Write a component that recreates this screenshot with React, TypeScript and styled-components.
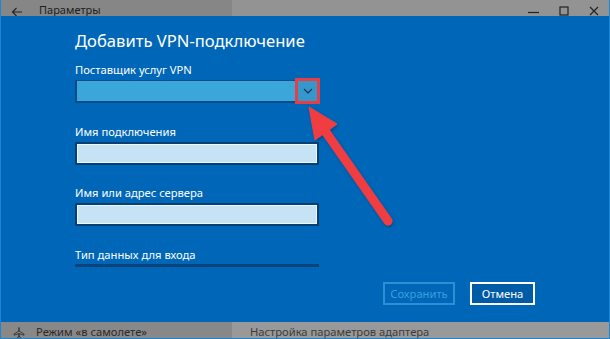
import styled, { createGlobalStyle } from "styled-components";

const GlobalStyle = createGlobalStyle`
  html, body {
    margin: 0;
    padding: 0;
    background: #0067b8;
  }
  * {
    box-sizing: border-box;
  }
`;

const FONT = `"Noto Sans", "Open Sans", sans-serif`;

// Окно
const Window = styled.div`
  position: relative;
  width: 610px;
  height: 339px;
  display: flex;
  flex-direction: column;
  overflow: hidden;
  border: 1px solid #1a86d6;
  border-top: none;
  font-family: ${FONT};
  background: #0067b8;
`;

const Bar = styled.div<{ $height: number }>`
  display: flex;
  height: ${({ $height }) => $height}px;
  flex-shrink: 0;
  overflow: hidden;
`;

const BarPart = styled.div<{ $bg: string; $width?: number }>`
  display: flex;
  align-items: flex-start;
  background: ${({ $bg }) => $bg};
  ${({ $width }) => ($width ? `width: ${$width}px;` : "flex: 1;")}
  overflow: hidden;
  white-space: nowrap;
`;

const BackIcon = styled.span`
  width: 14px;
  margin-left: 10px;
  margin-top: 7px;
  display: flex;
`;

const TitleText = styled.span`
  margin-left: 14px;
  margin-top: 3px;
  font-size: 11px;
  line-height: 14px;
  color: #1d1d1d;
`;

const WinControls = styled.div`
  margin-left: auto;
  display: flex;
  align-items: center;
  height: 16px;
  padding-top: 6px;
  padding-right: 10px;
  gap: 20px;
`;

const Dialog = styled.div`
  flex: 1;
  display: flex;
  flex-direction: column;
  padding-left: 74px;
  padding-right: 74px;
`;

const Heading = styled.h1`
  margin: 11px 0 0;
  font-weight: 400;
  font-size: 16.6px;
  line-height: 28px;
  color: #ffffff;
`;

const Label = styled.div<{ $top: number }>`
  margin-top: ${({ $top }) => $top}px;
  font-size: 11.2px;
  line-height: 16px;
  color: #ffffff;
`;

const Select = styled.div`
  margin-top: 2px;
  width: 244px;
  height: 23px;
  display: flex;
  background: #3aa6da;
  border: 2px solid #0b4c86;
  border-top-width: 1px;
  border-right: none;
`;

const ChevronBox = styled.div`
  margin-left: auto;
  position: relative;
  width: 22px;
  display: flex;
  align-items: center;
  justify-content: center;
  background: #3597cc;
`;

const Highlight = styled.div`
  position: absolute;
  left: -2px;
  top: -3px;
  right: -1px;
  bottom: -3px;
  border: 3px solid #ea3d43;
`;

const TextInput = styled.div`
  margin-top: 2px;
  width: 244px;
  height: 23px;
  background: #c6e2f5;
  border: 2px solid #0a3f72;
  box-shadow: inset 0 0 0 1px #eef7fd;
`;

const Underline = styled.div`
  margin-top: 1px;
  width: 244px;
  height: 3px;
  background: #0c4479;
`;

const Buttons = styled.div`
  margin-top: 15px;
  display: flex;
  justify-content: flex-end;
  gap: 15px;
`;

const Button = styled.button<{ $primary?: boolean }>`
  height: 23px;
  width: ${({ $primary }) => ($primary ? 65 : 72)}px;
  padding: 0;
  font-family: ${FONT};
  font-size: 11.2px;
  background: ${({ $primary }) => ($primary ? "#005ba6" : "transparent")};
  color: ${({ $primary }) => ($primary ? "#ffffff" : "#3a9ee0")};
  border: 2px solid ${({ $primary }) => ($primary ? "#ffffff" : "#2f8fd6")};
`;

const BottomText = styled.span<{ $indent: number; $color: string }>`
  margin-left: ${({ $indent }) => $indent}px;
  margin-top: 3px;
  font-size: 11.2px;
  line-height: 14px;
  color: ${({ $color }) => $color};
`;

const PlaneIcon = styled.span`
  margin-left: 12px;
  margin-top: 5px;
  display: flex;
`;

const ArrowLayer = styled.svg`
  position: absolute;
  left: 0;
  top: 0;
  pointer-events: none;
`;

const App = () => {
  return (
    <>
      <GlobalStyle />
      <Window>
        <Bar $height={16}>
          <BarPart $bg="#868686" $width={231}>
            <BackIcon>
              <svg width="12" height="10" viewBox="0 0 12 10">
                <path d="M11 5H1.5M5.5 1L1.5 5l4 4" fill="none" stroke="#222" strokeWidth="1.1" />
              </svg>
            </BackIcon>
            <TitleText>Параметры</TitleText>
          </BarPart>
          <BarPart $bg="#939393">
            <WinControls>
              <svg width="11" height="10" viewBox="0 0 11 10">
                <path d="M0 6.5h11" stroke="#222" strokeWidth="1.2" />
              </svg>
              <svg width="10" height="10" viewBox="0 0 10 10">
                <rect x="1" y="1" width="8" height="8" fill="none" stroke="#222" strokeWidth="1.2" />
              </svg>
              <svg width="10" height="10" viewBox="0 0 10 10">
                <path d="M1 1l8 8M9 1L1 9" stroke="#222" strokeWidth="1.2" />
              </svg>
            </WinControls>
          </BarPart>
        </Bar>

        <Dialog>
          <Heading>Добавить VPN-подключение</Heading>
          <Label $top={7}>Поставщик услуг VPN</Label>
          <Select>
            <ChevronBox>
              <svg width="10" height="6" viewBox="0 0 10 6">
                <path d="M1 1l4 4 4-4" fill="none" stroke="#0d2f55" strokeWidth="1.1" />
              </svg>
              <Highlight />
            </ChevronBox>
          </Select>
          <Label $top={21}>Имя подключения</Label>
          <TextInput />
          <Label $top={20}>Имя или адрес сервера</Label>
          <TextInput />
          <Label $top={21}>Тип данных для входа</Label>
          <Underline />
          <Buttons>
            <Button>Сохранить</Button>
            <Button $primary>Отмена</Button>
          </Buttons>
        </Dialog>

        <Bar $height={16}>
          <BarPart $bg="#888888" $width={231}>
            <PlaneIcon>
              <svg width="12" height="12" viewBox="0 0 12 12">
                <path
                  d="M6 0.5v3.5L1 7v1.2l5-1.6v2.6L4.5 10.4v1l1.5-.5 1.5.5v-1L6 9.2V6.6l5 1.6V7L6 4V0.5"
                  fill="none"
                  stroke="#333"
                  strokeWidth="0.9"
                />
              </svg>
            </PlaneIcon>
            <BottomText $indent={11} $color="#2b2b2b">
              Режим «в самолете»
            </BottomText>
          </BarPart>
          <BarPart $bg="#999999">
            <BottomText $indent={18} $color="#3c3c3c">
              Настройка параметров адаптера
            </BottomText>
          </BarPart>
        </Bar>

        <ArrowLayer width="610" height="339" viewBox="0 0 610 339">
          <defs>
            <filter id="sh" x="-20%" y="-20%" width="140%" height="140%">
              <feDropShadow dx="1" dy="1.5" stdDeviation="1.5" floodColor="#002a55" floodOpacity="0.5" />
            </filter>
          </defs>
          <g filter="url(#sh)" fill="#ef3d42" stroke="#ef3d42">
            <line x1="322" y1="128" x2="387" y2="221" strokeWidth="9" strokeLinecap="round" />
            <polygon points="308,107 336,124 314,140" strokeWidth="1" strokeLinejoin="round" />
          </g>
        </ArrowLayer>
      </Window>
    </>
  );
};

export default App;
